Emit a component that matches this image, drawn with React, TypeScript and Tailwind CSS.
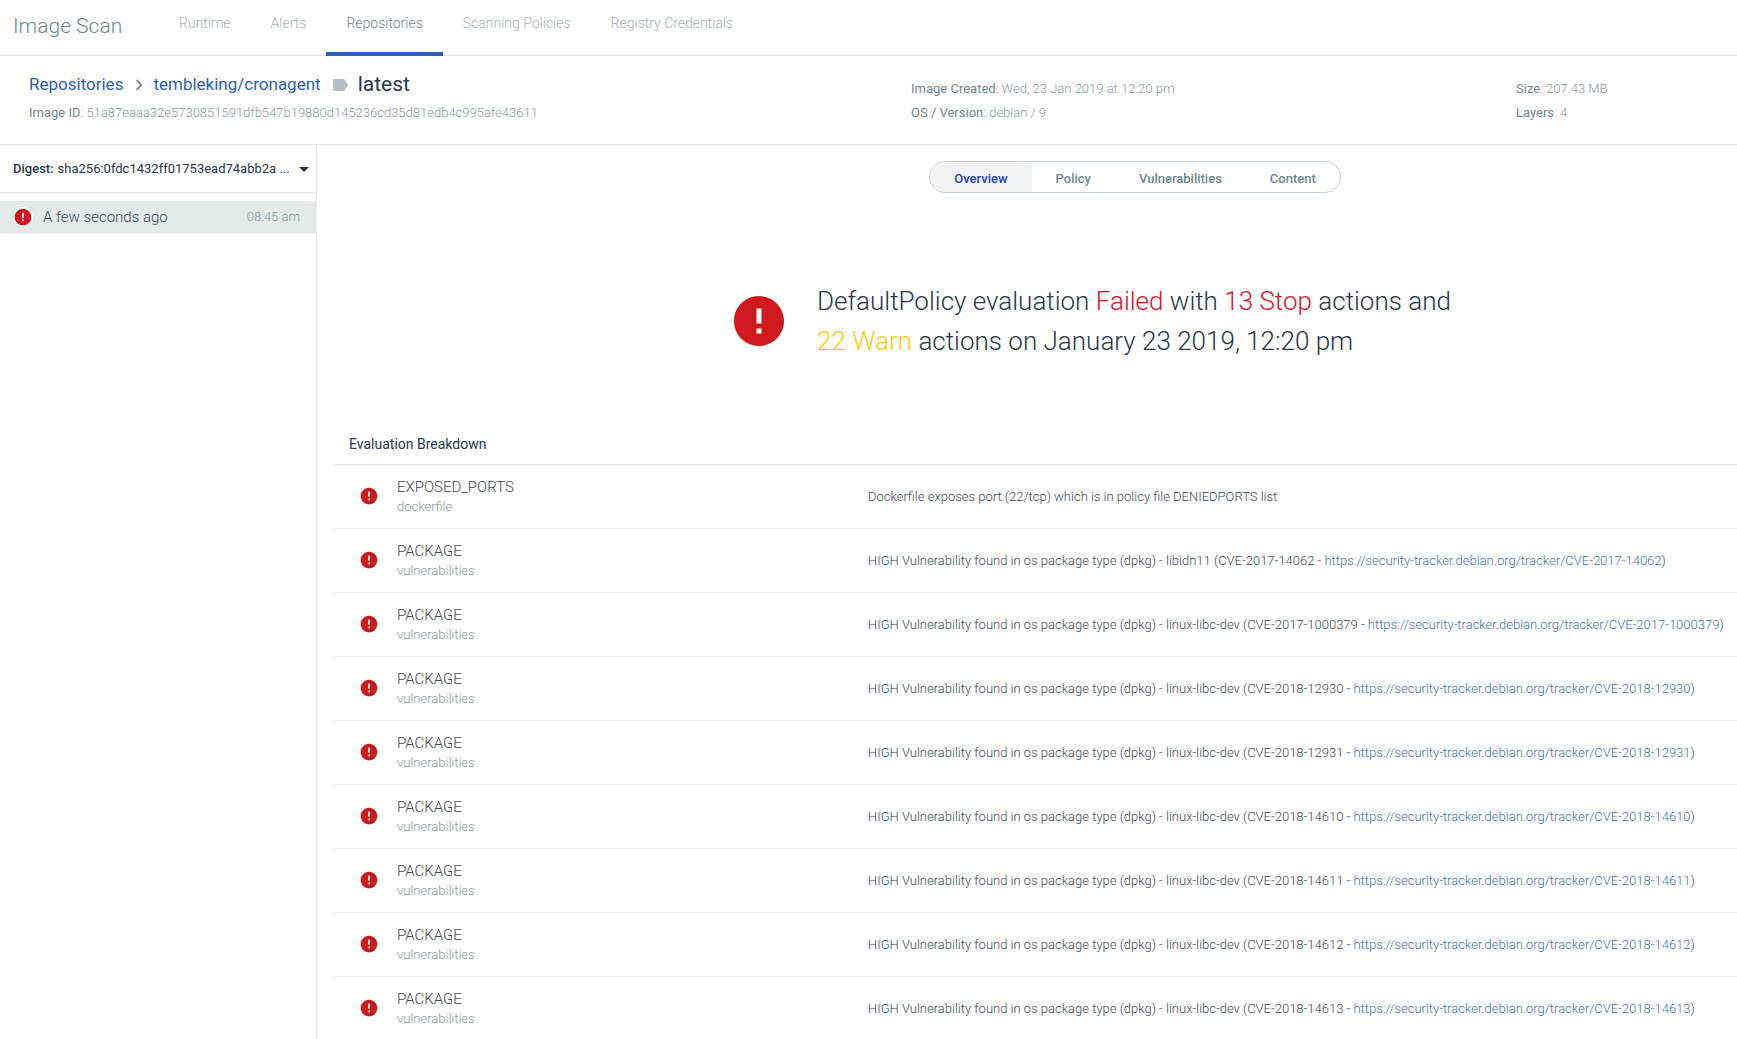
import { useState } from "react";
import { MdArrowDropDown, MdChevronRight, MdError } from "react-icons/md";

const navItems = ["Runtime", "Alerts", "Repositories", "Scanning Policies", "Registry Credentials"];
const tabs = ["Overview", "Policy", "Vulnerabilities", "Content"];

type Finding = { trigger: string; gate: string; pkg?: string; cve?: string; text?: string };

const findings: Finding[] = [
  {
    trigger: "EXPOSED_PORTS",
    gate: "dockerfile",
    text: "Dockerfile exposes port (22/tcp) which is in policy file DENIEDPORTS list",
  },
  { trigger: "PACKAGE", gate: "vulnerabilities", pkg: "libidn11", cve: "CVE-2017-14062" },
  { trigger: "PACKAGE", gate: "vulnerabilities", pkg: "linux-libc-dev", cve: "CVE-2017-1000379" },
  { trigger: "PACKAGE", gate: "vulnerabilities", pkg: "linux-libc-dev", cve: "CVE-2018-12930" },
  { trigger: "PACKAGE", gate: "vulnerabilities", pkg: "linux-libc-dev", cve: "CVE-2018-12931" },
  { trigger: "PACKAGE", gate: "vulnerabilities", pkg: "linux-libc-dev", cve: "CVE-2018-14610" },
  { trigger: "PACKAGE", gate: "vulnerabilities", pkg: "linux-libc-dev", cve: "CVE-2018-14611" },
  { trigger: "PACKAGE", gate: "vulnerabilities", pkg: "linux-libc-dev", cve: "CVE-2018-14612" },
  { trigger: "PACKAGE", gate: "vulnerabilities", pkg: "linux-libc-dev", cve: "CVE-2018-14613" },
];

function TopNav() {
  return (
    <header className="flex h-14 shrink-0 border-b border-[#e4e8e8] pl-[13px]">
      <h1 className="w-[146px] pt-3 text-[21px] leading-7 font-light text-[#6f8794]">Image Scan</h1>
      <nav className="flex">
        {navItems.map((item) => (
          <a
            key={item}
            href="#"
            className={
              item === "Repositories"
                ? "-mb-px border-b-4 border-[#2b5fb8] px-5 pt-[11px] text-sm leading-6 font-light text-[#6f8794]"
                : "px-5 pt-[11px] text-sm leading-6 font-light text-[#a3b3bc]"
            }
          >
            {item}
          </a>
        ))}
      </nav>
    </header>
  );
}

function Meta({ label, value }: { label: string; value: string }) {
  return (
    <p className="text-[13px] leading-6 font-light text-[#849aa5]">
      <span className="font-normal text-[#6f8794]">{label}</span>: {value}
    </p>
  );
}

function ImageHeader() {
  return (
    <section className="grid h-[89px] shrink-0 grid-cols-[882fr_605fr_221fr] border-b border-[#e1eae9] pl-[29px]">
      <div className="pt-3">
        <div className="flex h-[33px] items-center text-[17px] text-[#2b5fb8]">
          <a href="#">Repositories</a>
          <MdChevronRight className="mr-[3px] ml-[5px] size-[22px] text-[#6f8794]" />
          <a href="#">tembleking/cronagent</a>
          <svg viewBox="0 0 15 12" className="mr-[10px] ml-3 h-3 w-[15px] fill-[#b3c1c5]" aria-hidden="true">
            <path d="M1 0h9.200q1 0 1.600.8l2.900 4.500q.4.700 0 1.400l-2.900 4.500q-.6.800-1.600.8H1q-1 0-1-1V1q0-1 1-1z" />
          </svg>
          <span className="text-[21px] text-[#26384a]">latest</span>
        </div>
        <Meta label="Image ID" value="51a87eaaa32e5730851591dfb547b19880d145236cd35d81edb4c995afe43611" />
      </div>
      <div className="pt-[21px]">
        <Meta label="Image Created" value="Wed, 23 Jan 2019 at 12:20 pm" />
        <Meta label="OS / Version" value="debian / 9" />
      </div>
      <div className="pt-[21px]">
        <Meta label="Size" value="207.43 MB" />
        <Meta label="Layers" value="4" />
      </div>
    </section>
  );
}

function Sidebar() {
  return (
    <aside className="w-[317px] shrink-0 border-r border-[#e1eae9]">
      <div className="relative flex h-12 items-center border-b border-[#e1eae9] pl-[13px] text-[13px] text-[#26384a]">
        <label htmlFor="digest" className="mr-1 font-medium">
          Digest:
        </label>
        <select id="digest" className="flex-1 appearance-none bg-transparent">
          <option>{"sha256:0fdc1432ff01753ead74abb2a\u00a0..."}</option>
        </select>
        <MdArrowDropDown className="pointer-events-none absolute right-0 size-6" />
      </div>
      <button type="button" className="mt-2 flex h-8 w-full items-center bg-[#e3eae9] pr-4 pl-[13px]">
        <span className="grid size-5 place-items-center rounded-full bg-white">
          <MdError className="size-5 text-[#d0191d]" />
        </span>
        <span className="ml-[10px] text-[15px] font-light text-[#3a4b5a]">A few seconds ago</span>
        <span className="ml-auto text-[13px] font-light text-[#849aa5]">08:45 am</span>
      </button>
    </aside>
  );
}

function Tabs() {
  const [active, setActive] = useState("Overview");
  return (
    <div className="flex justify-center pt-4 pl-[216px]">
      <div role="tablist" className="flex h-8 overflow-hidden rounded-full border border-[#c3d1d2]">
        {tabs.map((tab) => (
          <button
            key={tab}
            type="button"
            role="tab"
            aria-selected={tab === active}
            onClick={() => setActive(tab)}
            className={
              tab === active
                ? "bg-[#f1f3f5] px-6 pt-1 text-[13px] font-medium text-[#2244cc]"
                : "px-6 pt-1 text-[13px] font-medium text-[#6f8794]"
            }
          >
            {tab}
          </button>
        ))}
      </div>
    </div>
  );
}

function Summary() {
  return (
    <div className="mt-[88px] flex items-center justify-center pl-[132px]">
      <MdError className="size-[60px] shrink-0 text-[#d0191d]" />
      <p className="ml-7 w-[640px] text-[26px] leading-10 font-light text-[#26384a]">
        DefaultPolicy evaluation <span className="text-[#d9161f]">Failed</span> with{" "}
        <span className="text-[#d9161f]">13 Stop</span> actions and <span className="text-[#f8cc12]">22 Warn</span>{" "}
        actions on January 23 2019, 12:20 pm
      </p>
    </div>
  );
}

function Breakdown() {
  return (
    <section className="mt-[59px] ml-4">
      <h2 className="h-[45px] border-b border-[#e1eae9] pt-3 pl-4 text-sm leading-6 text-[#26384a]">
        Evaluation Breakdown
      </h2>
      <table className="w-full table-fixed border-separate border-spacing-0 text-left whitespace-nowrap">
        <colgroup>
          <col className="w-16" />
          <col className="w-[471px]" />
          <col />
        </colgroup>
        <tbody>
          {findings.map((f) => {
            const url = `https://security-tracker.debian.org/tracker/${f.cve}`;
            return (
              <tr key={f.cve ?? f.trigger} className="h-16">
                <td className="border-b border-[#ecf2f1] pb-[2px] pl-[26px]">
                  <MdError className="size-5 text-[#d0191d]" title="Stop" />
                </td>
                <td className="border-b border-[#ecf2f1]">
                  <div className="text-[15px] leading-5 font-light text-[#3a4b5a]">{f.trigger}</div>
                  <div className="text-[13px] leading-5 font-light text-[#849aa5]">{f.gate}</div>
                </td>
                <td className="border-b border-[#ecf2f1] text-[13px] font-light text-[#3a4b5a]">
                  {f.cve ? (
                    <>
                      HIGH Vulnerability found in os package type (dpkg) - {f.pkg} ({f.cve} -{" "}
                      <a href={url} className="text-[#3e70c9]">
                        {url}
                      </a>
                      )
                    </>
                  ) : (
                    f.text
                  )}
                </td>
              </tr>
            );
          })}
        </tbody>
      </table>
    </section>
  );
}

export default function App() {
  return (
    <div className="flex h-screen flex-col overflow-hidden bg-white font-[Roboto,sans-serif]">
      <TopNav />
      <ImageHeader />
      <div className="flex min-h-0 flex-1">
        <Sidebar />
        <main className="min-w-0 flex-1 overflow-hidden">
          <Tabs />
          <Summary />
          <Breakdown />
        </main>
      </div>
    </div>
  );
}
